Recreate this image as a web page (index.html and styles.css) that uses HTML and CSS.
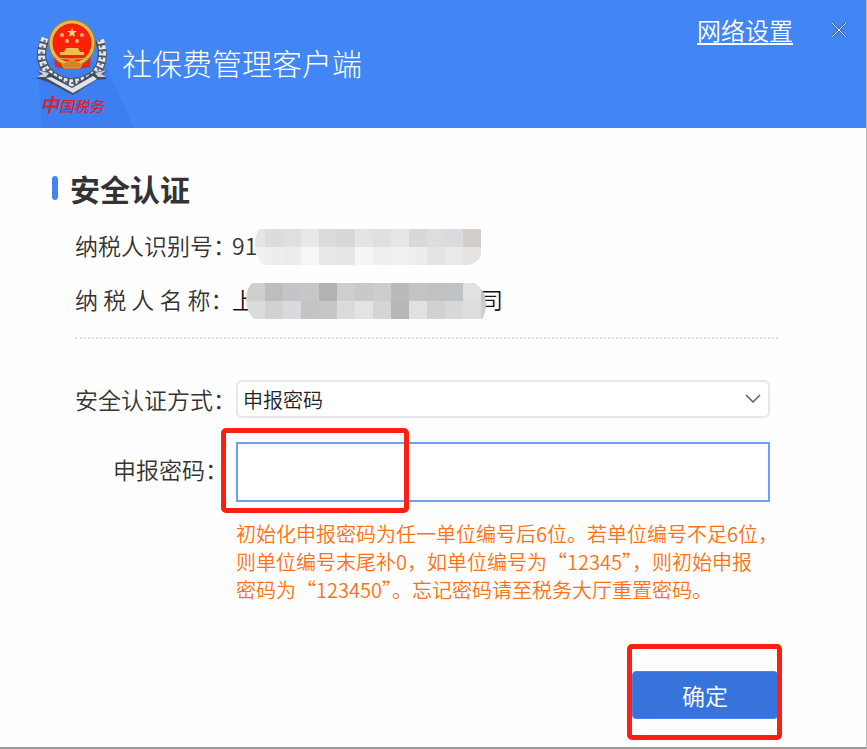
FILE: index.html
```html
<!DOCTYPE html>
<html lang="zh-CN">

<head>
    <meta charset="UTF-8">
    <meta name="viewport" content="width=device-width, initial-scale=1.0">
    <title>社保费管理客户端</title>
    <link rel="stylesheet" href="styles.css">
</head>

<body>
    <div class="window">
        <header class="header">
            <div class="logo">
                <svg class="emblem" viewBox="0 0 140 128" aria-hidden="true">
                    <!-- 徽标阴影 -->
                    <path d="M37 58 L104 62 L134 128 H42 Z" fill="#3d7ff0" />
                    <!-- 麦穗 -->
                    <g fill="none">
                        <path d="M45 40 Q36 60 50 74 Q58 81 72 83 Q87 81 95 74 Q107 59 99 40" stroke="#4a5462" stroke-width="9" />
                        <path d="M45 38 Q36 60 50 74 Q58 81 72 83 Q87 81 95 74 Q107 59 100 38" stroke="#e3e8ee" stroke-width="7" stroke-dasharray="4 2" />
                        <path d="M45 40 Q36 60 50 74 Q58 81 72 83 Q87 81 95 74 Q107 59 99 40" stroke="#5e6875" stroke-width="2" stroke-dasharray="3 3" />
                    </g>
                    <!-- 绶带 -->
                    <path d="M36 70 L49 72 L72 87 L94 72 L108 70 L102 75 L107 79 L96 80 L73 95 L48 82 L36 78 L42 75 Z" fill="#434c58" />
                    <path d="M37 70 L49 73 L46 77 L37 77 L43 74 Z M107 70 L95 73 L98 77 L106 77 L101 74 Z" fill="#cbd2da" />
                    <path d="M46 78 L51 77 L72 88 L93 76 L97 79 L73 93 Z" fill="#dfe4ea" />
                    <!-- 国徽 -->
                    <path d="M54 55 L91 55 L90 67 Q72 71 55 67 Z" fill="#e02a16" />
                    <circle cx="72" cy="43" r="21" fill="#e93015" stroke="#9b8332" stroke-width="5" />
                    <circle cx="72" cy="43" r="21" fill="#fb2008" stroke="#e0bd51" stroke-width="3" />
                    <path d="M72 27 L73 31 L77 31 L74 33 L75 37 L72 35 L69 37 L70 33 L67 31 L71 31 Z" fill="#ffdf7c" />
                    <g fill="#ffb476">
                        <circle cx="62" cy="35" r="2" />
                        <circle cx="82" cy="35" r="2" />
                        <circle cx="67" cy="41" r="2" />
                        <circle cx="77" cy="41" r="2" />
                    </g>
                    <path d="M66 48 H78 L80 52 H84 V55 H60 V52 H64 Z" fill="#f2c04a" />
                    <path d="M56 58 Q72 61 88 58 M62 64 L72 60 L82 64 L80 68 H64 Z" fill="#cf8526" stroke="#dba73a" />
                </svg>
                <span class="logo-text">中国税务</span>
            </div>
            <h1 class="app-title">社保费管理客户端</h1>
            <a class="network" href="#">网络设置</a>
            <button class="close" type="button" aria-label="关闭">
                <svg viewBox="0 0 16 16" aria-hidden="true">
                    <path d="M1 1 L15 15 M15 1 L1 15" fill="none" stroke="#315ea8" stroke-width="2" />
                    <path d="M1 1 L15 15 M15 1 L1 15" fill="none" stroke="#e6edf8" stroke-width="1" />
                </svg>
            </button>
        </header>

        <main class="content">
            <h2 class="section-title">安全认证</h2>

            <dl class="info">
                <div class="info-row">
                    <dt>纳税人识别号：</dt>
                    <dd><span class="value-id">91</span><svg class="mosaic" id="mosaic-id" width="226" height="36" aria-hidden="true"></svg></dd>
                </div>
                <div class="info-row">
                    <dt>纳 税 人 名 称：</dt>
                    <dd class="name"><span class="value-start">上</span><svg class="mosaic" id="mosaic-name" width="240" height="36" aria-hidden="true"></svg><span class="value-end">司</span></dd>
                </div>
            </dl>

            <form class="form" onsubmit="return false">
                <label for="auth-type">安全认证方式：</label>
                <div class="select-box">
                    <select id="auth-type">
                        <option>申报密码</option>
                    </select>
                    <svg class="arrow" viewBox="0 0 16 10" aria-hidden="true">
                        <path d="M1 1 L8 8 L15 1" fill="none" stroke="#5c5c5c" stroke-width="1.5" />
                    </svg>
                </div>

                <label class="label-short" for="password">申报密码：</label>
                <div class="password-box">
                    <input id="password" type="password">
                    <div class="mark mark-input"></div>
                </div>

                <p class="hint">初始化申报密码为任一单位编号后6位。若单位编号不足6位，<br>则单位编号末尾补0，如单位编号为“12345”，则初始申报<br>密码为“123450”。忘记密码请至税务大厅重置密码。</p>

                <div class="actions">
                    <button class="submit" type="submit">确定</button>
                    <div class="mark mark-submit"></div>
                </div>
            </form>
        </main>
    </div>

    <script>
        const cell = 18; // 马赛克格子大小

        // first 为第一格的宽度，其余格子宽度相同
        function drawMosaic(id, first, outline, rows) {
            const svg = document.getElementById(id);
            let html = `<clipPath id="${id}-clip"><path d="${outline}"/></clipPath><g clip-path="url(#${id}-clip)">`;
            rows.forEach((colors, row) => {
                colors.split(' ').forEach((color, col) => {
                    const x = col === 0 ? 0 : first + (col - 1) * cell;
                    const width = col === 0 ? first : cell;
                    html += `<rect x="${x}" y="${row * cell}" width="${width}" height="${cell}" fill="#${color}"/>`;
                });
            });
            svg.innerHTML = html + '</g>';
        }

        drawMosaic('mosaic-id', 10, 'M4 0 H226 V27 Q222 34 214 36 H8 Q0 28 0 14 Q0 6 4 0 Z', [
            'e5e5e5 dbdcde dfdfdf e8e8e8 dcdbd9 d7d8da e4e4e2 dfe1df e6e6e4 d8d8d8 dddddd d9dbde d3cecb',
            'f1f1f1 eceeed ececec f6f6f4 e9e8e6 e6e7e9 f5f5f3 efefef f0f0f0 ededed e4e4e4 eaeaea e5e4e2'
        ]);
        drawMosaic('mosaic-name', 19, 'M6 0 H229 Q240 8 240 20 Q240 30 236 36 H8 Q0 28 0 17 Q0 7 6 0 Z', [
            'd0cfcd bcbebd c3c5c8 c8c7c5 b2b2b2 cdcfce c9c9c9 cdcdcb bababa c5c4c3 c2c1bf bfc3c6 e0e1e3 c9c4c2',
            'dcdcdc d3d1cf d9dadd c5c4c3 c6c6c6 dadbdd e3e3e1 d3d5d8 b8b6b7 e1e1e1 d2d1cf d7d8da dddddf d2cdca'
        ]);
    </script>
</body>

</html>
```
FILE: styles.css
```css
html,
body {
    margin: 0;
    padding: 0;
}

body {
    font-family: "Noto Sans CJK SC", "Noto Sans", sans-serif;
    font-size: 23px;
    font-weight: 350;
    color: #333;
    background-color: #fff;
}

* {
    box-sizing: border-box;
}

.window {
    min-height: 100vh;
    border-right: 1px solid #bbb;
    border-bottom: 2px solid #999;
    background-color: #fefefe;
}

/* 顶部标题栏 */
.header {
    display: flex;
    align-items: flex-start;
    height: 128px;
    padding-right: 19px;
    background-color: #4286f5;
    color: #fff;
}

.logo {
    position: relative;
    flex: none;
    width: 122px;
}

.emblem {
    display: block;
    width: 140px;
    height: 128px;
}

/* 徽标下方的文字 */
.logo-text {
    position: absolute;
    left: 40px;
    top: 93px;
    font-size: 15px;
    line-height: 22px;
    font-weight: 500;
    font-style: italic;
    white-space: nowrap;
    color: #d92330;
}

.logo-text::first-letter {
    font-size: 19px;
    font-weight: 700;
}

.app-title {
    position: relative;
    flex: 1;
    margin: 0;
    font-size: 30px;
    line-height: 124px;
    font-weight: 300;
}

.network {
    margin-right: 38px;
    font-size: 24px;
    line-height: 60px;
    color: #fff;
    text-underline-offset: 3px;
}

.close {
    width: 16px;
    height: 60px;
    padding: 0;
    border: none;
    background: none;
    cursor: pointer;
}

.close svg {
    display: block;
    width: 16px;
    height: 16px;
}

/* 内容 */
.content {
    padding: 40px 88px 28px 52px;
}

.section-title {
    display: flex;
    align-items: center;
    gap: 12px;
    margin: 0 0 12px;
    font-size: 30px;
    line-height: 40px;
    font-weight: 700;
}

.section-title::before {
    content: "";
    width: 6px;
    height: 24px;
    border-radius: 3px;
    background-color: #4286f5;
}

.info {
    margin: 0 0 41px 23px;
    padding-bottom: 9px;
    border-bottom: 2px dotted #ddd;
}

.info-row {
    display: flex;
    align-items: center;
    height: 54px;
}

.info-row dt {
    width: 157px;
    padding-bottom: 4px;
    white-space: nowrap;
}

.info-row dd {
    display: flex;
    align-items: center;
    margin: 0;
}

.info-row span {
    padding-bottom: 4px;
    white-space: nowrap;
}

/* 盖在文字上面 */
.mosaic {
    flex: none;
    position: relative;
    z-index: 1;
}

.name {
    color: #111;
}

.value-id {
    width: 23px;
}

.value-start {
    width: 14px;
}

.value-end {
    display: flex;
    justify-content: flex-end;
    width: 17px;
}

/* 表单 */
.form {
    display: grid;
    grid-template-columns: 161px minmax(0, 1fr);
    align-items: center;
    margin: 0 8px 0 23px;
}

.form label {
    white-space: nowrap;
}

.form .label-short {
    padding-right: 8px;
    text-align: right;
}

.select-box {
    position: relative;
}

.select-box select {
    display: block;
    width: 100%;
    height: 38px;
    padding: 0 36px 0 5px;
    border: 2px solid #e6e6ec;
    border-radius: 6px;
    background-color: #fff;
    font-family: inherit;
    font-size: 20px;
    font-weight: 350;
    color: #222;
    appearance: none;
}

.arrow {
    position: absolute;
    right: 9px;
    top: 14px;
    width: 16px;
    height: 10px;
    pointer-events: none;
}

.password-box {
    position: relative;
    margin: 24px 0 18px;
}

.password-box input {
    display: block;
    width: 100%;
    height: 60px;
    padding: 0 8px;
    border: 2px solid #6e9ff3;
    background-color: #fff;
    font-size: 20px;
    outline: none;
}

.hint {
    grid-column: 2;
    margin: 0;
    font-size: 20px;
    line-height: 28px;
    white-space: nowrap;
    color: #ff7112;
}

.actions {
    position: relative;
    grid-column: 2;
    justify-self: end;
    margin: 67px -8px 0 0;
}

.submit {
    display: block;
    width: 146px;
    height: 48px;
    padding: 0;
    border: 1px solid #4286f5;
    border-radius: 4px;
    background-color: #3674dc;
    font-family: inherit;
    font-size: 23px;
    font-weight: 350;
    color: #fff;
    cursor: pointer;
}

/* 红色标注框 */
.mark {
    position: absolute;
    border: 5px solid #ff1f12;
    border-radius: 5px;
    pointer-events: none;
}

.mark-input {
    left: -15px;
    top: -14px;
    width: 188px;
    height: 85px;
}

.mark-submit {
    inset: -27px -4px -21px -5px;
}
```
